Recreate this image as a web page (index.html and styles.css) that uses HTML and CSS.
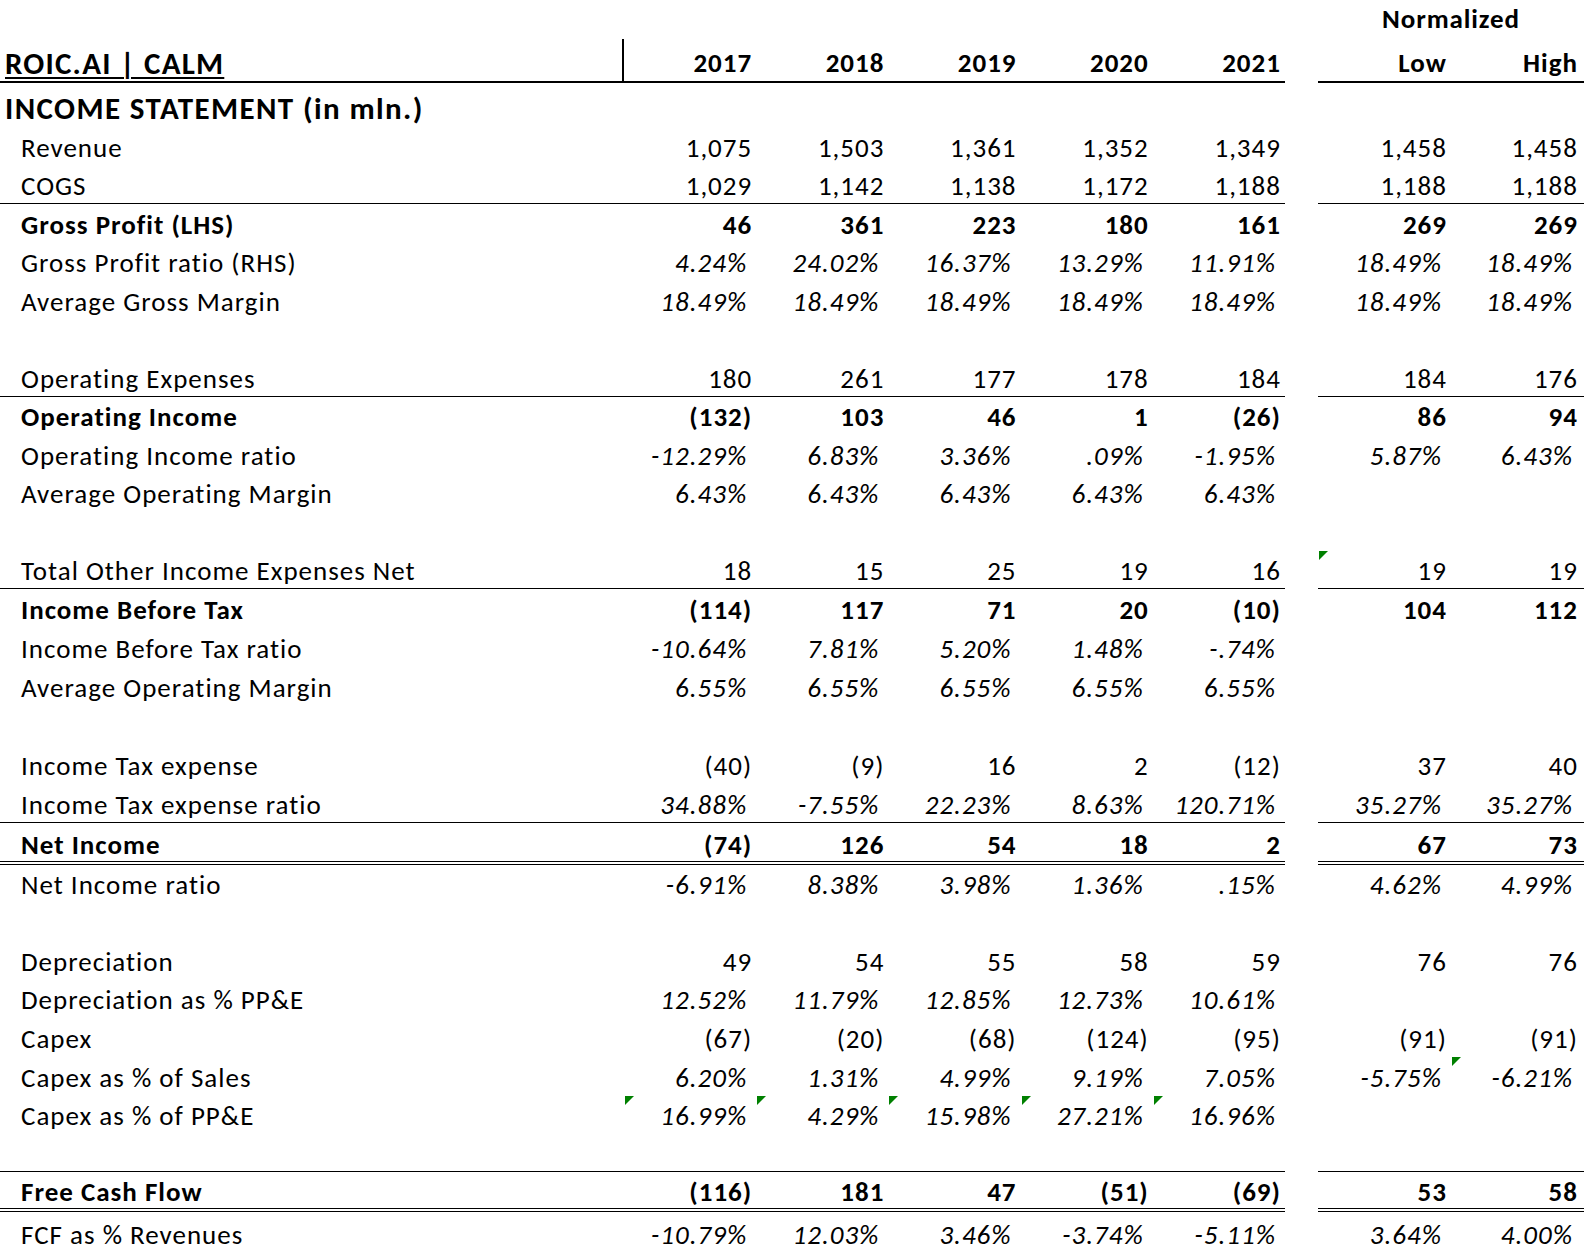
FILE: index.html
```html
<!DOCTYPE html>
<html lang="en">
<head>
<meta charset="utf-8">
<title>ROIC.AI | CALM</title>
<link rel="stylesheet" href="styles.css">
</head>
<body>
<div class="sheet">
  <div class="row h39">
    <div class="c lbl"></div>
    <div class="c"></div><div class="c"></div><div class="c"></div><div class="c"></div><div class="c"></div>
    <div class="c gap"></div>
    <div class="c norm b">Normalized</div>
  </div>
  <div class="row h44 hdr">
    <div class="c lbl title"><span class="u">ROIC.AI | CALM</span></div>
    <div class="c b">2017</div><div class="c b">2018</div><div class="c b">2019</div><div class="c b">2020</div><div class="c b">2021</div>
    <div class="c gap"></div>
    <div class="c b">Low</div><div class="c b">High</div>
  </div>
  <div class="row h45">
    <div class="c lbl section">INCOME STATEMENT (in mln.)</div>
  </div>

  <div class="row h38"><div class="c lbl in">Revenue</div><div class="c">1,075</div><div class="c">1,503</div><div class="c">1,361</div><div class="c">1,352</div><div class="c">1,349</div><div class="c gap"></div><div class="c">1,458</div><div class="c">1,458</div></div>
  <div class="row h38 bb"><div class="c lbl in">COGS</div><div class="c">1,029</div><div class="c">1,142</div><div class="c">1,138</div><div class="c">1,172</div><div class="c">1,188</div><div class="c gap"></div><div class="c">1,188</div><div class="c">1,188</div></div>
  <div class="row h39 b"><div class="c lbl in">Gross Profit (LHS)</div><div class="c">46</div><div class="c">361</div><div class="c">223</div><div class="c">180</div><div class="c">161</div><div class="c gap"></div><div class="c">269</div><div class="c">269</div></div>
  <div class="row h38 pct"><div class="c lbl in">Gross Profit ratio (RHS)</div><div class="c">4.24%</div><div class="c">24.02%</div><div class="c">16.37%</div><div class="c">13.29%</div><div class="c">11.91%</div><div class="c gap"></div><div class="c">18.49%</div><div class="c">18.49%</div></div>
  <div class="row h39 pct"><div class="c lbl in">Average Gross Margin</div><div class="c">18.49%</div><div class="c">18.49%</div><div class="c">18.49%</div><div class="c">18.49%</div><div class="c">18.49%</div><div class="c gap"></div><div class="c">18.49%</div><div class="c">18.49%</div></div>
  <div class="row h38"></div>
  <div class="row h39 bb"><div class="c lbl in">Operating Expenses</div><div class="c">180</div><div class="c">261</div><div class="c">177</div><div class="c">178</div><div class="c">184</div><div class="c gap"></div><div class="c">184</div><div class="c">176</div></div>
  <div class="row h38 b"><div class="c lbl in">Operating Income</div><div class="c">(132)</div><div class="c">103</div><div class="c">46</div><div class="c">1</div><div class="c">(26)</div><div class="c gap"></div><div class="c">86</div><div class="c">94</div></div>
  <div class="row h39 pct"><div class="c lbl in">Operating Income ratio</div><div class="c">-12.29%</div><div class="c">6.83%</div><div class="c">3.36%</div><div class="c">.09%</div><div class="c">-1.95%</div><div class="c gap"></div><div class="c">5.87%</div><div class="c">6.43%</div></div>
  <div class="row h38 pct"><div class="c lbl in">Average Operating Margin</div><div class="c">6.43%</div><div class="c">6.43%</div><div class="c">6.43%</div><div class="c">6.43%</div><div class="c">6.43%</div><div class="c gap"></div><div class="c"></div><div class="c"></div></div>
  <div class="row h39"></div>
  <div class="row h38 bb"><div class="c lbl in">Total Other Income Expenses Net</div><div class="c">18</div><div class="c">15</div><div class="c">25</div><div class="c">19</div><div class="c">16</div><div class="c gap"></div><div class="c"><i class="tri"></i>19</div><div class="c">19</div></div>
  <div class="row h39 b"><div class="c lbl in">Income Before Tax</div><div class="c">(114)</div><div class="c">117</div><div class="c">71</div><div class="c">20</div><div class="c">(10)</div><div class="c gap"></div><div class="c">104</div><div class="c">112</div></div>
  <div class="row h39 pct"><div class="c lbl in">Income Before Tax ratio</div><div class="c">-10.64%</div><div class="c">7.81%</div><div class="c">5.20%</div><div class="c">1.48%</div><div class="c">-.74%</div><div class="c gap"></div><div class="c"></div><div class="c"></div></div>
  <div class="row h39 pct"><div class="c lbl in">Average Operating Margin</div><div class="c">6.55%</div><div class="c">6.55%</div><div class="c">6.55%</div><div class="c">6.55%</div><div class="c">6.55%</div><div class="c gap"></div><div class="c"></div><div class="c"></div></div>
  <div class="row h39"></div>
  <div class="row h39"><div class="c lbl in">Income Tax expense</div><div class="c">(40)</div><div class="c">(9)</div><div class="c">16</div><div class="c">2</div><div class="c">(12)</div><div class="c gap"></div><div class="c">37</div><div class="c">40</div></div>
  <div class="row h39 pct bb"><div class="c lbl in">Income Tax expense ratio</div><div class="c">34.88%</div><div class="c">-7.55%</div><div class="c">22.23%</div><div class="c">8.63%</div><div class="c">120.71%</div><div class="c gap"></div><div class="c">35.27%</div><div class="c">35.27%</div></div>
  <div class="row h42 b dbl"><div class="c lbl in">Net Income</div><div class="c">(74)</div><div class="c">126</div><div class="c">54</div><div class="c">18</div><div class="c">2</div><div class="c gap"></div><div class="c">67</div><div class="c">73</div></div>
  <div class="row h38 pct"><div class="c lbl in">Net Income ratio</div><div class="c">-6.91%</div><div class="c">8.38%</div><div class="c">3.98%</div><div class="c">1.36%</div><div class="c">.15%</div><div class="c gap"></div><div class="c">4.62%</div><div class="c">4.99%</div></div>
  <div class="row h38"></div>
  <div class="row h39"><div class="c lbl in">Depreciation</div><div class="c">49</div><div class="c">54</div><div class="c">55</div><div class="c">58</div><div class="c">59</div><div class="c gap"></div><div class="c">76</div><div class="c">76</div></div>
  <div class="row h38 pct"><div class="c lbl in">Depreciation as % PP&amp;E</div><div class="c">12.52%</div><div class="c">11.79%</div><div class="c">12.85%</div><div class="c">12.73%</div><div class="c">10.61%</div><div class="c gap"></div><div class="c"></div><div class="c"></div></div>
  <div class="row h39"><div class="c lbl in">Capex</div><div class="c">(67)</div><div class="c">(20)</div><div class="c">(68)</div><div class="c">(124)</div><div class="c">(95)</div><div class="c gap"></div><div class="c">(91)</div><div class="c">(91)</div></div>
  <div class="row h39 pct"><div class="c lbl in">Capex as % of Sales</div><div class="c">6.20%</div><div class="c">1.31%</div><div class="c">4.99%</div><div class="c">9.19%</div><div class="c">7.05%</div><div class="c gap"></div><div class="c">-5.75%</div><div class="c"><i class="tri"></i>-6.21%</div></div>
  <div class="row h38 pct"><div class="c lbl in">Capex as % of PP&amp;E</div><div class="c"><i class="tri"></i>16.99%</div><div class="c"><i class="tri"></i>4.29%</div><div class="c"><i class="tri"></i>15.98%</div><div class="c"><i class="tri"></i>27.21%</div><div class="c"><i class="tri"></i>16.96%</div><div class="c gap"></div><div class="c"></div><div class="c"></div></div>
  <div class="row h38 bb"><div class="c lbl"></div><div class="c"></div><div class="c"></div><div class="c"></div><div class="c"></div><div class="c"></div><div class="c gap"></div><div class="c"></div><div class="c"></div></div>
  <div class="row h40 b dbl"><div class="c lbl in">Free Cash Flow</div><div class="c">(116)</div><div class="c">181</div><div class="c">47</div><div class="c">(51)</div><div class="c">(69)</div><div class="c gap"></div><div class="c">53</div><div class="c">58</div></div>
  <div class="row h41 pct"><div class="c lbl in">FCF as % Revenues</div><div class="c">-10.79%</div><div class="c">12.03%</div><div class="c">3.46%</div><div class="c">-3.74%</div><div class="c">-5.11%</div><div class="c gap"></div><div class="c">3.64%</div><div class="c">4.00%</div></div>
</div>
</body>
</html>
```

FILE: styles.css
```css
* { box-sizing: border-box; }
html, body { margin: 0; padding: 0; background: #fff; }
body {
  font-family: "Carlito", "Lato", "Liberation Sans", sans-serif;
  font-size: 27px;
  letter-spacing: 1px;
  color: #000;
}
.sheet { width: 1584px; }
.row {
  display: grid;
  grid-template-columns: 624px repeat(5, 132.2px) 33px 133px 133px;
}
.h38 { height: 38px; }
.h39 { height: 39px; }
.h40 { height: 40px; }
.h41 { height: 41px; }
.h42 { height: 42px; }
.h44 { height: 44px; }
.h45 { height: 45px; }
.c {
  position: relative;
  display: flex;
  align-items: flex-end;
  justify-content: flex-end;
  padding: 0 4px 4px 0;
  line-height: 28px;
  white-space: nowrap;
}
.row > .c:nth-child(9) { padding-right: 6px; }
.lbl { justify-content: flex-start; padding-left: 5px; }
.lbl.in { padding-left: 21px; }
.b .c, .c.b { font-weight: 700; }
.pct .c { font-style: italic; padding-right: 9px; }
.pct > .c:nth-child(9) { padding-right: 11px; }
.pct .c.lbl { font-style: normal; }
.norm { grid-column: 8 / span 2; justify-content: center; padding: 0 0 6px 0; letter-spacing: 0.9px; }
.hdr .c { border-bottom: 2px solid #000; }
.hdr .c.gap { border-bottom: 0; }
.hdr .c.lbl { border-right: 2px solid #000; }
.title { font-size: 31px; font-weight: 700; letter-spacing: 1.2px; }
.title .u { text-decoration: underline; text-decoration-thickness: 2px; text-underline-offset: 3px; }
.section { grid-column: 1 / span 9; font-size: 31px; font-weight: 700; letter-spacing: 1.4px; padding-bottom: 6px; }
.bb .c { border-bottom: 1px solid #000; padding-bottom: 3px; }
.dbl .c { border-bottom: 4px double #000; padding-bottom: 2px; }
.bb .c.gap, .dbl .c.gap { border-bottom: 0; }
.tri {
  position: absolute;
  top: 0;
  left: 1px;
  width: 0;
  height: 0;
  border-top: 9px solid #008000;
  border-right: 9px solid transparent;
}
```
